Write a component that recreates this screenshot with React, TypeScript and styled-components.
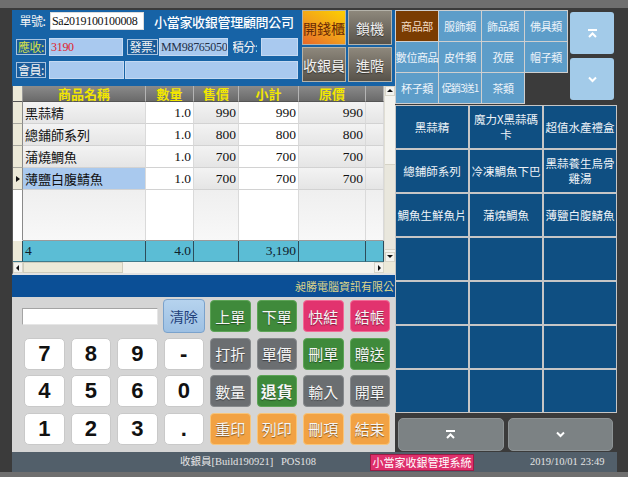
import React from 'react';
import styled, { createGlobalStyle } from 'styled-components';

const CJK = `"Noto Sans CJK TC", "Noto Sans CJK SC", sans-serif`;
const SERIF = `"Liberation Serif", "Noto Sans CJK TC", serif`;
const SANS = `"Liberation Sans", Arial, sans-serif`;

const GlobalStyle = createGlobalStyle`
  html, body { margin: 0; padding: 0; background: #3b3b3b; }
  * { box-sizing: border-box; }
`;

const Frame = styled.div`
  width: 628px;
  height: 477px;
  overflow: hidden;
  background: #3b3b3b;
  border-top: 8px solid #6f6f6f;
  border-bottom: 5px solid #6f6f6f;
  padding: 2px 11px 0 12px;
  display: grid;
  grid-template-columns: 383px 222px;
  grid-template-rows: 442px 20px;
`;

const LeftPane = styled.div`
  display: flex;
  flex-direction: column;
`;

/* ---------- header ---------- */
const Header = styled.div`
  height: 76px;
  display: flex;
  background: #1763a6;
`;

const Form = styled.div`
  width: 290px;
  padding: 2px 0 0 4px;
  display: flex;
  flex-direction: column;
`;

const FormRow = styled.div<{ $gap: number }>`
  display: flex;
  align-items: center;
  height: 18px;
  margin-top: ${(p) => p.$gap}px;
`;

const Label = styled.span<{ $w: number; $boxed?: boolean; $color?: string; $mr?: number }>`
  flex: none;
  width: ${(p) => p.$w}px;
  height: 16px;
  margin-right: ${(p) => p.$mr ?? 3}px;
  display: flex;
  align-items: center;
  justify-content: center;
  white-space: nowrap;
  overflow: hidden;
  font: 12px/1 ${CJK};
  letter-spacing: -0.4px;
  color: ${(p) => p.$color ?? '#f4f4f4'};
  border: ${(p) => (p.$boxed ? '1px solid #a9c3df' : '1px solid transparent')};
  background: ${(p) => (p.$boxed ? '#1a5b99' : 'transparent')};
`;

const Field = styled.div<{ $w: number; $tone: 'white' | 'blue'; $color?: string; $mr?: number }>`
  flex: none;
  width: ${(p) => p.$w}px;
  height: 18px;
  margin-right: ${(p) => p.$mr ?? 0}px;
  padding: 0 1px;
  display: flex;
  align-items: center;
  white-space: nowrap;
  overflow: hidden;
  font: 12px/1 ${SERIF};
  letter-spacing: -0.3px;
  color: ${(p) => p.$color ?? '#111'};
  background: ${(p) => (p.$tone === 'white' ? '#ffffff' : '#a9c9ef')};
  border: 1px solid ${(p) => (p.$tone === 'white' ? '#dcdcdc' : '#c5d9f2')};
`;

const Company = styled.span`
  margin-left: 10px;
  font: 500 13px/1 ${CJK};
  letter-spacing: -0.3px;
  color: #ffffff;
  white-space: nowrap;
`;

const HeadBtns = styled.div`
  display: grid;
  grid-template-columns: 44px 44px;
  grid-template-rows: 35px 35px;
  gap: 2px;
`;

const HeadBtn = styled.div<{ $accent?: boolean }>`
  display: flex;
  align-items: center;
  justify-content: center;
  border: 1px solid #b5b3aa;
  font: 14px/1 ${CJK};
  color: ${(p) => (p.$accent ? '#6a2a06' : '#f2f2f2')};
  text-shadow: ${(p) => (p.$accent ? 'none' : '0 1px 1px rgba(0,0,0,0.5)')};
  background: ${(p) =>
    p.$accent
      ? 'linear-gradient(30deg, #e8682a 0%, #f3a41a 50%, #fccf00 100%)'
      : 'linear-gradient(#8e887c, #57524a)'};
`;

/* ---------- table ---------- */
const TableBox = styled.div`
  height: 189px;
  display: flex;
  flex-direction: column;
  background: #ffffff;
  border-left: 1px solid #5a5a5a;
  border-bottom: 2px solid #e2e2e2;
`;

const GridArea = styled.div`
  height: 176px;
  display: flex;
`;

const Grid = styled.div`
  width: 371px;
  display: grid;
  grid-template-columns: 10px 123px 48px 45px 60px 67px 18px;
  grid-template-rows: 16px repeat(4, 22px) 51px 21px;
`;

const HeadCell = styled.div<{ $marker?: boolean }>`
  display: flex;
  align-items: center;
  justify-content: center;
  font: bold 13px/1 ${CJK};
  color: #f2e600;
  background: ${(p) => (p.$marker ? '#ece9d8' : 'linear-gradient(#8a8a8a, #6a6a6a)')};
  border-right: 1px solid ${(p) => (p.$marker ? '#9a9a9a' : '#b4b4b4')};
  border-bottom: 1px solid #555;
`;

const Marker = styled.div<{ $filler?: boolean }>`
  display: flex;
  align-items: center;
  justify-content: center;
  background: ${(p) => (p.$filler ? '#ffffff' : '#ece9d8')};
  border-right: 1px solid #8a8a8a;
  border-bottom: 1px solid ${(p) => (p.$filler ? 'transparent' : '#a8a8a0')};
`;

const Cell = styled.div<{ $tone: 'shade' | 'plain'; $right?: boolean; $selected?: boolean; $filler?: boolean; $cjk?: boolean }>`
  display: flex;
  align-items: center;
  justify-content: ${(p) => (p.$right ? 'flex-end' : 'flex-start')};
  padding: 0 2px;
  overflow: hidden;
  white-space: nowrap;
  font: ${(p) => (p.$cjk ? `13px/1 ${CJK}` : `13.5px/1 ${SERIF}`)};
  color: #111;
  background: ${(p) =>
    p.$selected
      ? '#a9c9ee'
      : p.$tone === 'shade'
      ? p.$filler
        ? 'linear-gradient(#efefef, #f8f8f8)'
        : 'linear-gradient(#f3f3f3, #e5e5e5)'
      : '#ffffff'};
  border-right: 1px solid #dadada;
  border-bottom: 1px solid ${(p) => (p.$filler ? '#9a9a9a' : '#d2d2d2')};
`;

const SumCell = styled.div<{ $right?: boolean; $marker?: boolean }>`
  display: flex;
  align-items: center;
  justify-content: ${(p) => (p.$right ? 'flex-end' : 'flex-start')};
  padding: 0 2px;
  font: 13.5px/1 ${SERIF};
  color: #10202a;
  background: ${(p) => (p.$marker ? '#ece9d8' : '#5bbdd5')};
  border-right: 1px solid #2d4c5a;
  border-bottom: 1px solid #3f7a8c;
`;

const VScroll = styled.div`
  width: 11px;
  display: flex;
  flex-direction: column;
  background: #f4f3ee;
  border-left: 1px solid #e0ded4;
`;

const ScrollBtn = styled.div<{ $w?: number }>`
  width: ${(p) => (p.$w ? `${p.$w}px` : '100%')};
  height: ${(p) => (p.$w ? '100%' : '10px')};
  flex: none;
  display: flex;
  align-items: center;
  justify-content: center;
  background: #f4f3ee;
  border: 1px solid #d8d5c8;
`;

const VThumb = styled.div`
  margin-top: 68px;
  height: 86px;
  background: #e9e7dd;
  border-top: 1px solid #d6d3c6;
  border-bottom: 1px solid #d6d3c6;
`;

const Spacer = styled.div`
  flex: 1;
`;

const HScroll = styled.div`
  height: 11px;
  display: flex;
  background: #f4f3ee;
`;

const HThumb = styled.div`
  width: 100px;
  background: #ece9d8;
  border: 1px solid #cfccbc;
`;

const Corner = styled.div`
  width: 11px;
  background: #ece9d8;
`;

/* ---------- company strip ---------- */
const Strip = styled.div`
  height: 22px;
  background: #0b4f96;
  overflow: hidden;
  display: flex;
  align-items: center;
  padding-left: 283px;
  white-space: nowrap;
  font: 11px/1 ${CJK};
  color: #dcd48a;
`;

/* ---------- keypad ---------- */
const Keypad = styled.div`
  height: 155px;
  background: #d5d5d5;
  padding: 3px 0 0 12px;
  display: grid;
  grid-template-columns: repeat(8, 40.5px);
  grid-template-rows: repeat(4, 32px);
  column-gap: 6px;
  row-gap: 5.5px;
`;

const Entry = styled.div`
  grid-column: 1 / span 3;
  align-self: center;
  height: 17px;
  margin-left: -2px;
  background: #ffffff;
  border: 1px solid #a4a4a4;
  border-right-color: #e6e6e6;
  border-bottom-color: #e6e6e6;
`;

const ClearBtn = styled.div`
  margin: -1px -1px;
  display: flex;
  align-items: center;
  justify-content: center;
  border-radius: 4px;
  border: 1px solid #7aa2cc;
  background: linear-gradient(#b6d3ee, #9dc0e3);
  font: 14px/1 ${CJK};
  color: #22407a;
`;

const NumKey = styled.div`
  display: flex;
  align-items: center;
  justify-content: center;
  border-radius: 5px;
  border: 1px solid #c9c9c9;
  background: #ffffff;
  font: bold 22px/1 ${SANS};
  color: #111;
`;

const toneColors = {
  green: ['#3f8a3b', '#5da457'],
  pink: ['#e2336e', '#f26a96'],
  grey: ['#6b6e71', '#878a8d'],
  orange: ['#f2a243', '#f8c57a'],
} as const;

type Tone = keyof typeof toneColors;

const FnBtn = styled.div<{ $tone: Tone; $strong?: boolean }>`
  display: flex;
  align-items: center;
  justify-content: center;
  border-radius: 4px;
  border: 1px solid ${(p) => toneColors[p.$tone][1]};
  background: ${(p) => toneColors[p.$tone][0]};
  font: ${(p) => (p.$strong ? 'bold 16px/1' : '15px/1')} ${CJK};
  color: #f6f6f6;
  text-shadow: 0 1px 1px rgba(0, 0, 0, 0.45);
`;

/* ---------- right pane ---------- */
const RightPane = styled.div`
  display: flex;
  flex-direction: column;
`;

const CatArea = styled.div`
  height: 95px;
  display: flex;
  padding: 1px 0 0 1px;
`;

const CatGrid = styled.div`
  display: grid;
  grid-template-columns: repeat(4, 42px);
  grid-template-rows: repeat(3, 30px);
  gap: 1px;
  align-content: start;
`;

const CatTile = styled.div<{ $active?: boolean; $tight?: boolean }>`
  display: flex;
  align-items: center;
  justify-content: center;
  white-space: nowrap;
  overflow: hidden;
  box-shadow: 0 0 0 1px #cfcfcf;
  background: ${(p) => (p.$active ? '#7a3c02' : '#5d9dc9')};
  color: ${(p) => (p.$active ? '#f2dcc6' : '#eef4fa')};
  font: ${(p) => (p.$tight ? '10px/1' : '11px/1')} ${CJK};
  letter-spacing: ${(p) => (p.$tight ? '-0.9px' : '-0.4px')};
`;

const NavCol = styled.div`
  margin-left: 3px;
  padding-top: 1px;
  display: flex;
  flex-direction: column;
  gap: 4px;
`;

const NavTile = styled.div`
  width: 44px;
  height: 42px;
  display: flex;
  align-items: center;
  justify-content: center;
  border-radius: 3px;
  background: #a3cbe9;
`;

const ProductGrid = styled.div`
  height: 308px;
  background: #c6c6c6;
  padding: 1px;
  display: grid;
  grid-template-columns: repeat(3, 1fr);
  grid-template-rows: repeat(7, 1fr);
  gap: 2px;
`;

const Product = styled.div`
  display: flex;
  align-items: center;
  justify-content: center;
  text-align: center;
  padding: 0 1px;
  background: #0f4f82;
  color: #eef3f8;
  font: 11.5px/15px ${CJK};
`;

const BottomNav = styled.div`
  height: 39px;
  display: flex;
  gap: 4px;
  padding: 5px 4px 1px 3px;
`;

const PageBtn = styled.div`
  flex: 1;
  display: flex;
  align-items: center;
  justify-content: center;
  border-radius: 5px;
  border: 1px solid #8e9496;
  background: #7c8284;
`;

/* ---------- status bar ---------- */
const StatusBar = styled.div`
  grid-column: 1 / -1;
  background: #525f6a;
  display: grid;
  grid-template-columns: 168px 101px 89px 160px 1fr;
  align-items: center;
  font: 10.5px/1 ${SERIF};
  color: #e4e4e4;
  white-space: nowrap;
`;

const Badge = styled.span`
  justify-self: start;
  width: 104px;
  height: 17px;
  display: flex;
  align-items: center;
  justify-content: center;
  background: #de2f6b;
  border: 1px solid #9a1c44;
  font: 11px/1 ${CJK};
  color: #ffffff;
`;

/* ---------- icons ---------- */
const UpIcon = () => (
  <svg width="11" height="9" viewBox="0 0 11 9">
    <line x1="1" y1="1" x2="10" y2="1" stroke="#fff" strokeWidth="2" />
    <polyline points="2,8 5.5,4.5 9,8" fill="none" stroke="#fff" strokeWidth="2" />
  </svg>
);

const DownIcon = () => (
  <svg width="11" height="7" viewBox="0 0 11 7">
    <polyline points="2,1.5 5.5,5 9,1.5" fill="none" stroke="#fff" strokeWidth="2" />
  </svg>
);

const Tri = ({ dir }: { dir: 'up' | 'down' | 'left' | 'right' | 'row' }) => {
  const pts = {
    up: '1,5 4,2 7,5',
    down: '1,2 4,5 7,2',
    left: '5,1 2,4 5,7',
    right: '3,1 6,4 3,7',
    row: '2,1 6,4 2,7',
  }[dir];
  return (
    <svg width="8" height="8" viewBox="0 0 8 8">
      <polygon points={pts} fill="#111" />
    </svg>
  );
};

/* ---------- data ---------- */
const columns = [
  { key: 'name', tone: 'shade', right: false },
  { key: 'qty', tone: 'plain', right: true },
  { key: 'price', tone: 'shade', right: true },
  { key: 'sub', tone: 'plain', right: true },
  { key: 'orig', tone: 'shade', right: true },
  { key: 'extra', tone: 'shade', right: true },
] as const;

const heads = ['商品名稱', '數量', '售價', '小計', '原價', ''];

type Line = { name: string; qty: string; price: string; sub: string; orig: string; extra: string };

const lines: Line[] = [
  { name: '黑蒜精', qty: '1.0', price: '990', sub: '990', orig: '990', extra: '' },
  { name: '總鋪師系列', qty: '1.0', price: '800', sub: '800', orig: '800', extra: '' },
  { name: '蒲燒鯛魚', qty: '1.0', price: '700', sub: '700', orig: '700', extra: '' },
  { name: '薄鹽白腹鯖魚', qty: '1.0', price: '700', sub: '700', orig: '700', extra: '' },
];

const summary = ['4', '4.0', '', '3,190', '', ''];

const numKeys = [
  ['7', '8', '9', '-'],
  ['4', '5', '6', '0'],
  ['1', '2', '3', '.'],
];

const fnKeys: { label: string; tone: Tone; strong?: boolean }[][] = [
  [
    { label: '上單', tone: 'green' },
    { label: '下單', tone: 'green' },
    { label: '快結', tone: 'pink' },
    { label: '結帳', tone: 'pink' },
  ],
  [
    { label: '打折', tone: 'grey' },
    { label: '單價', tone: 'grey' },
    { label: '刪單', tone: 'green' },
    { label: '贈送', tone: 'green' },
  ],
  [
    { label: '數量', tone: 'grey' },
    { label: '退貨', tone: 'green', strong: true },
    { label: '輸入', tone: 'grey' },
    { label: '開單', tone: 'grey' },
  ],
  [
    { label: '重印', tone: 'orange' },
    { label: '列印', tone: 'orange' },
    { label: '刪項', tone: 'orange' },
    { label: '結束', tone: 'orange' },
  ],
];

const categories = ['商品部', '服飾類', '飾品類', '佛具類', '數位商品', '皮件類', '孜展', '帽子類', '杯子類', '促銷3送1', '茶類'];

const products = [
  '黑蒜精',
  '魔力X黑蒜碼卡',
  '超值水產禮盒',
  '總鋪師系列',
  '冷凍鯛魚下巴',
  '黑蒜養生烏骨雞湯',
  '鯛魚生鮮魚片',
  '蒲燒鯛魚',
  '薄鹽白腹鯖魚',
];

const App = () => {
  const productCells = [...products, ...Array(21 - products.length).fill('')];

  return (
    <>
      <GlobalStyle />
      <Frame>
        <LeftPane>
          <Header>
            <Form>
              <FormRow $gap={0}>
                <Label $w={33} $mr={1}>單號:</Label>
                <Field $w={94} $tone='white'>Sa2019100100008</Field>
                <Company>小當家收銀管理顧問公司</Company>
              </FormRow>
              <FormRow $gap={8}>
                <Label $w={30} $boxed $color='#d6e04a'>應收:</Label>
                <Field $w={74} $tone='blue' $color='#e0202a' $mr={4}>3190</Field>
                <Label $w={31} $boxed $mr={1}>發票:</Label>
                <Field $w={69} $tone='blue' $color='#23304a' $mr={4}>MM98765050</Field>
                <Label $w={26} $mr={3}>積分:</Label>
                <Field $w={37} $tone='blue' />
              </FormRow>
              <FormRow $gap={5}>
                <Label $w={30} $boxed>會員:</Label>
                <Field $w={75} $tone='blue' $mr={1} />
                <Field $w={173} $tone='blue' />
              </FormRow>
            </Form>
            <HeadBtns>
              <HeadBtn $accent>開錢櫃</HeadBtn>
              <HeadBtn>鎖機</HeadBtn>
              <HeadBtn>收銀員</HeadBtn>
              <HeadBtn>進階</HeadBtn>
            </HeadBtns>
          </Header>

          <TableBox>
            <GridArea>
              <Grid>
                <HeadCell $marker />
                {heads.map((h, i) => (
                  <HeadCell key={i}>{h}</HeadCell>
                ))}
                {lines.map((line, r) => {
                  const selected = r === lines.length - 1;
                  return (
                    <React.Fragment key={r}>
                      <Marker>{selected && <Tri dir='row' />}</Marker>
                      {columns.map((c) => (
                        <Cell
                          key={c.key}
                          $tone={c.tone}
                          $right={c.right}
                          $cjk={c.key === 'name'}
                          $selected={selected && c.key === 'name'}
                        >
                          {line[c.key]}
                        </Cell>
                      ))}
                    </React.Fragment>
                  );
                })}
                <Marker $filler />
                {columns.map((c) => (
                  <Cell key={c.key} $tone={c.tone} $filler />
                ))}
                <SumCell $marker />
                {summary.map((s, i) => (
                  <SumCell key={i} $right={i > 0}>
                    {s}
                  </SumCell>
                ))}
              </Grid>
              <VScroll>
                <ScrollBtn>
                  <Tri dir='up' />
                </ScrollBtn>
                <VThumb />
                <Spacer />
                <ScrollBtn>
                  <Tri dir='down' />
                </ScrollBtn>
              </VScroll>
            </GridArea>
            <HScroll>
              <ScrollBtn $w={10}>
                <Tri dir='left' />
              </ScrollBtn>
              <HThumb />
              <Spacer />
              <ScrollBtn $w={10}>
                <Tri dir='right' />
              </ScrollBtn>
              <Corner />
            </HScroll>
          </TableBox>

          <Strip>昶勝電腦資訊有限公司</Strip>

          <Keypad>
            <Entry />
            <ClearBtn>清除</ClearBtn>
            {fnKeys[0].map((k) => (
              <FnBtn key={k.label} $tone={k.tone}>
                {k.label}
              </FnBtn>
            ))}
            {numKeys.map((row, r) => (
              <React.Fragment key={r}>
                {row.map((n) => (
                  <NumKey key={n}>{n}</NumKey>
                ))}
                {fnKeys[r + 1].map((k) => (
                  <FnBtn key={k.label} $tone={k.tone} $strong={k.strong}>
                    {k.label}
                  </FnBtn>
                ))}
              </React.Fragment>
            ))}
          </Keypad>
        </LeftPane>

        <RightPane>
          <CatArea>
            <CatGrid>
              {categories.map((c, i) => (
                <CatTile key={c} $active={i === 0} $tight={c.length > 4}>
                  {c}
                </CatTile>
              ))}
            </CatGrid>
            <NavCol>
              <NavTile>
                <UpIcon />
              </NavTile>
              <NavTile>
                <DownIcon />
              </NavTile>
            </NavCol>
          </CatArea>

          <ProductGrid>
            {productCells.map((p, i) => (
              <Product key={i}>{p}</Product>
            ))}
          </ProductGrid>

          <BottomNav>
            <PageBtn>
              <UpIcon />
            </PageBtn>
            <PageBtn>
              <DownIcon />
            </PageBtn>
          </BottomNav>
        </RightPane>

        <StatusBar>
          <span />
          <span>收銀員[Build190921]</span>
          <span>POS108</span>
          <Badge>小當家收銀管理系統</Badge>
          <span>2019/10/01 23:49</span>
        </StatusBar>
      </Frame>
    </>
  );
};

export default App;
